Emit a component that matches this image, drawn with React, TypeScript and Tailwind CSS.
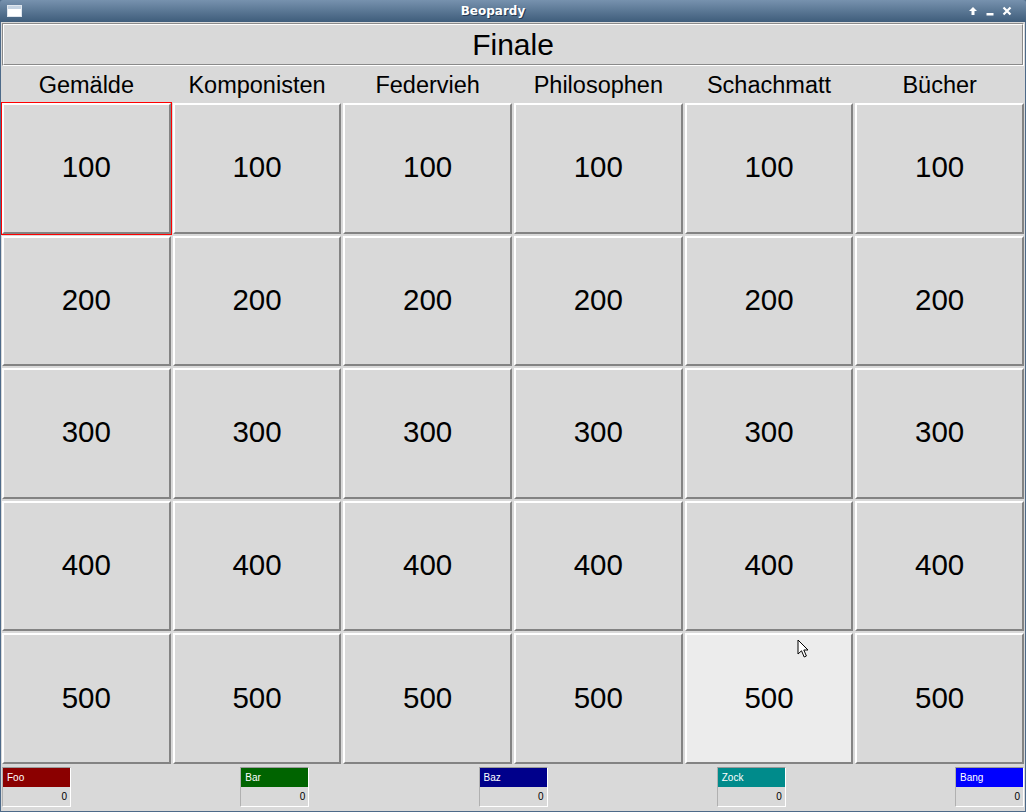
import React from "react";

const categories = ["Gemälde", "Komponisten", "Federvieh", "Philosophen", "Schachmatt", "Bücher"];
const values = [100, 200, 300, 400, 500];
const players = [
  { name: "Foo", bg: "bg-[#8b0000]" },
  { name: "Bar", bg: "bg-[#006400]" },
  { name: "Baz", bg: "bg-[#00008b]" },
  { name: "Zock", bg: "bg-[#008b8b]" },
  { name: "Bang", bg: "bg-[#0000ff]" },
];

function Cell({ value, focused, active }: { value: number; focused: boolean; active: boolean }) {
  return (
    <div className={focused ? "p-[1px] bg-[#ff0000]" : "p-[1px] bg-[#d9d9d9]"}>
      <div
        className={
          "h-full border-2 border-t-white border-l-white border-b-[#838383] border-r-[#838383] flex items-center justify-center pb-[2px] text-[29.5px] text-black " +
          (active ? "bg-[#ececec]" : "bg-[#d9d9d9]")
        }
      >
        {value}
      </div>
    </div>
  );
}

export default function App() {
  return (
    <div
      className="w-[1026px] h-[812px] flex flex-col bg-[#4d6a89] relative overflow-hidden"
      style={{ fontFamily: '"Liberation Sans", Arial, sans-serif' }}
    >
      {/* Title bar */}
      <div className="h-[22px] flex items-center bg-gradient-to-b from-[#7792ae] to-[#3f5d7b] rounded-t-[3px] shrink-0">
        <div className="w-[24px] flex items-center justify-start pl-[7px]">
          <svg width="15" height="12" viewBox="0 0 15 12">
            <rect x="0.5" y="0.5" width="14" height="11" fill="#ffffff" stroke="#dfe6ee" />
            <rect x="1" y="1" width="13" height="3" fill="#c5d3e2" />
          </svg>
        </div>
        <div
          className="flex-1 text-center text-white font-bold text-[12px] leading-none"
          style={{ fontFamily: '"DejaVu Sans", sans-serif', textShadow: "1px 1px 0 #243a52" }}
        >
          Beopardy
        </div>
        <div className="w-[64px] flex items-center gap-[7px] pl-[6px]">
          <svg width="10" height="10" viewBox="0 0 10 10">
            <path d="M5 1 L9 5 L6.5 5 L6.5 9 L3.5 9 L3.5 5 L1 5 Z" fill="#ffffff" />
          </svg>
          <svg width="10" height="10" viewBox="0 0 10 10">
            <rect x="1.5" y="7" width="7" height="2.5" fill="#ffffff" />
          </svg>
          <svg width="10" height="10" viewBox="0 0 10 10">
            <path d="M1.5 1.5 L8.5 8.5 M8.5 1.5 L1.5 8.5" stroke="#ffffff" strokeWidth="2.2" />
          </svg>
        </div>
      </div>

      {/* Content */}
      <div className="flex-1 flex flex-col bg-[#d9d9d9] mx-[1px] mb-[1px]">
        {/* Finale */}
        <div className="mt-[1px] mx-[1px] h-[43px] border border-t-[#8a8a8a] border-l-[#8a8a8a] border-b-white border-r-white">
          <div className="h-full border border-t-white border-l-white border-b-[#8a8a8a] border-r-[#8a8a8a] flex items-center justify-center text-[30px] text-black">
            Finale
          </div>
        </div>

        {/* Categories */}
        <div className="h-[36px] grid grid-cols-6">
          {categories.map((c) => (
            <div key={c} className="flex items-center justify-center pt-[2px] text-[23.5px] text-black">
              {c}
            </div>
          ))}
        </div>

        {/* Board */}
        <div className="h-[663px] grid grid-cols-6 grid-rows-5">
          {values.map((v, r) =>
            categories.map((c, ci) => (
              <Cell key={c + v} value={v} focused={r === 0 && ci === 0} active={r === 4 && ci === 4} />
            ))
          )}
        </div>

        {/* Players */}
        <div className="flex-1 flex justify-between items-start px-[1px] pt-[2px]">
          {players.map((p) => (
            <div
              key={p.name}
              className="w-[69px] h-[40px] flex flex-col border border-t-[#9a9a9a] border-l-[#b0b0b0] border-b-white border-r-white"
            >
              <div className={"h-[19px] flex items-center pl-[4px] text-white text-[10px] " + p.bg}>{p.name}</div>
              <div className="flex-1 flex items-center justify-end pr-[3px] text-[10px] text-black">0</div>
            </div>
          ))}
        </div>
      </div>

      {/* Mouse cursor */}
      <svg className="absolute left-[797px] top-[639px]" width="14" height="20" viewBox="0 0 14 20">
        <path d="M1 1 L1 15 L4.5 11.8 L7.2 18 L9.4 17 L6.8 11 L11 11 Z" fill="#ffffff" stroke="#000000" strokeWidth="1" />
      </svg>
    </div>
  );
}
